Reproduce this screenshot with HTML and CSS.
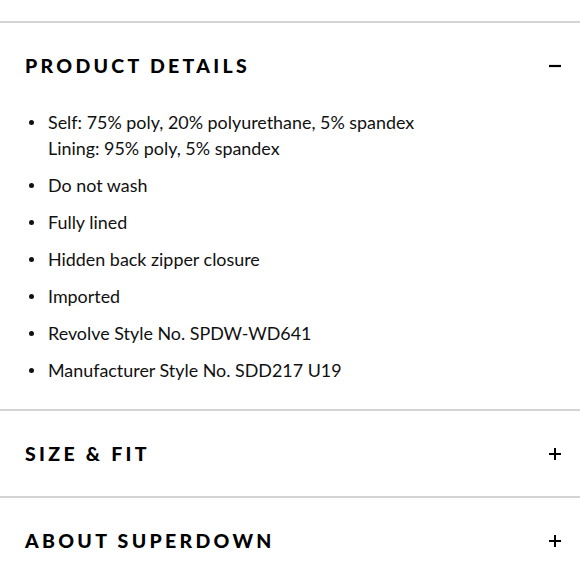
FILE: index.html
```html
<!DOCTYPE html>
<html lang="en">
<head>
<meta charset="utf-8">
<title>Product details</title>
<link rel="stylesheet" href="styles.css">
</head>
<body>
<div class="accordion">
  <section class="panel">
    <div class="panel-head">
      <h2 class="panel-title">PRODUCT DETAILS</h2>
      <svg class="toggle" width="14" height="14" viewBox="0 0 14 14"><path d="M1 7H13" stroke="#000" stroke-width="2.2"/></svg>
    </div>
    <ul class="details">
      <li>Self: 75% poly, 20% polyurethane, 5% spandex<br>Lining: 95% poly, 5% spandex</li>
      <li>Do not wash</li>
      <li>Fully lined</li>
      <li>Hidden back zipper closure</li>
      <li>Imported</li>
      <li>Revolve Style No. SPDW-WD641</li>
      <li>Manufacturer Style No. SDD217 U19</li>
    </ul>
  </section>
  <section class="panel">
    <div class="panel-head">
      <h2 class="panel-title">SIZE &amp; FIT</h2>
      <svg class="toggle" width="14" height="14" viewBox="0 0 14 14"><path d="M1 7H13M7 1V13" stroke="#000" stroke-width="2"/></svg>
    </div>
  </section>
  <section class="panel">
    <div class="panel-head">
      <h2 class="panel-title">ABOUT SUPERDOWN</h2>
      <svg class="toggle" width="14" height="14" viewBox="0 0 14 14"><path d="M1 7H13M7 1V13" stroke="#000" stroke-width="2"/></svg>
    </div>
  </section>
</div>
</body>
</html>
```

FILE: styles.css
```css
html, body {
  margin: 0;
  padding: 0;
  background: #fff;
}
body {
  font-family: "Lato", "Liberation Sans", sans-serif;
  color: #111;
}
.accordion {
  padding-top: 21px;
}
.panel {
  border-top: 2px solid #d4d4d4;
}
.panel-head {
  height: 85px;
  display: flex;
  align-items: center;
  justify-content: space-between;
  padding: 0 18px 0 25px;
}
.panel-title {
  margin: 0;
  font-family: "Lato", "Liberation Sans", sans-serif;
  font-weight: 900;
  font-size: 19.5px;
  letter-spacing: 3.3px;
  color: #000;
}
.toggle {
  display: block;
}
.details {
  list-style: none;
  margin: 1px 0 0 0;
  padding: 0 20px 26px 48px;
  font-family: "Lato", "Liberation Sans", sans-serif;
  font-size: 17.9px;
  line-height: 26px;
  color: #111;
}
.details li {
  position: relative;
  margin-bottom: 11px;
}
.details li:last-child {
  margin-bottom: 0;
}
.details li::before {
  content: "";
  position: absolute;
  left: -19px;
  top: 11px;
  width: 5px;
  height: 5px;
  border-radius: 50%;
  background: #111;
}
```
